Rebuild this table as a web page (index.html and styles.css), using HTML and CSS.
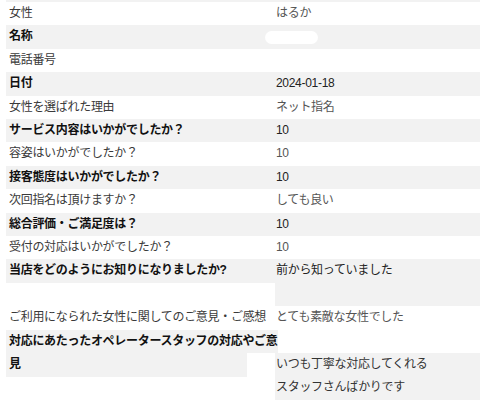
FILE: index.html
```html
<!DOCTYPE html>
<html lang="ja">
<head>
<meta charset="utf-8">
<link rel="stylesheet" href="styles.css">
</head>
<body>
<div class="sheet">
  <div class="strip"></div>
  <div class="row"><div class="label">女性</div><div class="value">はるか</div></div>
  <div class="row alt"><div class="label">名称</div><div class="value"><span class="mask"></span></div></div>
  <div class="row"><div class="label">電話番号</div><div class="value"></div></div>
  <div class="row alt"><div class="label">日付</div><div class="value">2024-01-18</div></div>
  <div class="row"><div class="label">女性を選ばれた理由</div><div class="value">ネット指名</div></div>
  <div class="row alt"><div class="label">サービス内容はいかがでしたか？</div><div class="value">10</div></div>
  <div class="row"><div class="label">容姿はいかがでしたか？</div><div class="value">10</div></div>
  <div class="row alt"><div class="label">接客態度はいかがでしたか？</div><div class="value">10</div></div>
  <div class="row"><div class="label">次回指名は頂けますか？</div><div class="value">しても良い</div></div>
  <div class="row alt"><div class="label">総合評価・ご満足度は？</div><div class="value">10</div></div>
  <div class="row"><div class="label">受付の対応はいかがでしたか？</div><div class="value">10</div></div>
  <div class="row alt"><div class="label">当店をどのようにお知りになりましたか?</div><div class="value">前から知っていました<br>&nbsp;</div></div>
  <div class="row"><div class="label">ご利用になられた女性に関してのご意見・ご感想</div><div class="value">とても素敵な女性でした</div></div>
  <div class="row alt split"><div class="label"><span class="line wide">対応にあたったオペレータースタッフの対応やご意</span><span class="line">見</span></div><div class="value late">いつも丁寧な対応してくれる<br>スタッフさんばかりです</div></div>
</div>
</body>
</html>
```

FILE: styles.css
```css
html, body {
  margin: 0;
  padding: 0;
  background: #ffffff;
}

.sheet {
  padding-left: 6px;
  font-family: "Liberation Sans", "Noto Sans CJK JP", sans-serif;
  font-size: 12px;
  letter-spacing: -0.3px;
}

.strip {
  height: 2px;
  background: #f2f2f2;
}

.row {
  display: grid;
  grid-template-columns: 269px 1fr;
  align-items: start;
  line-height: 23.4px;
}

.label {
  padding-left: 3px;
  white-space: nowrap;
  color: #3a3a3a;
}

.value {
  padding-left: 1px;
  min-height: 23.4px;
  color: #555;
}

.alt .label,
.alt .value {
  background: #f2f2f2;
}

.alt .label {
  font-weight: bold;
  color: #111;
}

.alt .value {
  color: #222;
}

.mask {
  display: inline-block;
  width: 53px;
  height: 13px;
  margin-left: -11px;
  vertical-align: middle;
  background: #ffffff;
  border-radius: 7px;
}

.split .label {
  background: transparent;
  padding-left: 0;
}

.split .line {
  display: block;
  padding-left: 3px;
  background: #f2f2f2;
  width: 238px;
}

.split .line.wide {
  width: 269px;
  position: relative;
  z-index: 1;
}

.value.late {
  margin-top: 23.4px;
  color: #333;
}
```
